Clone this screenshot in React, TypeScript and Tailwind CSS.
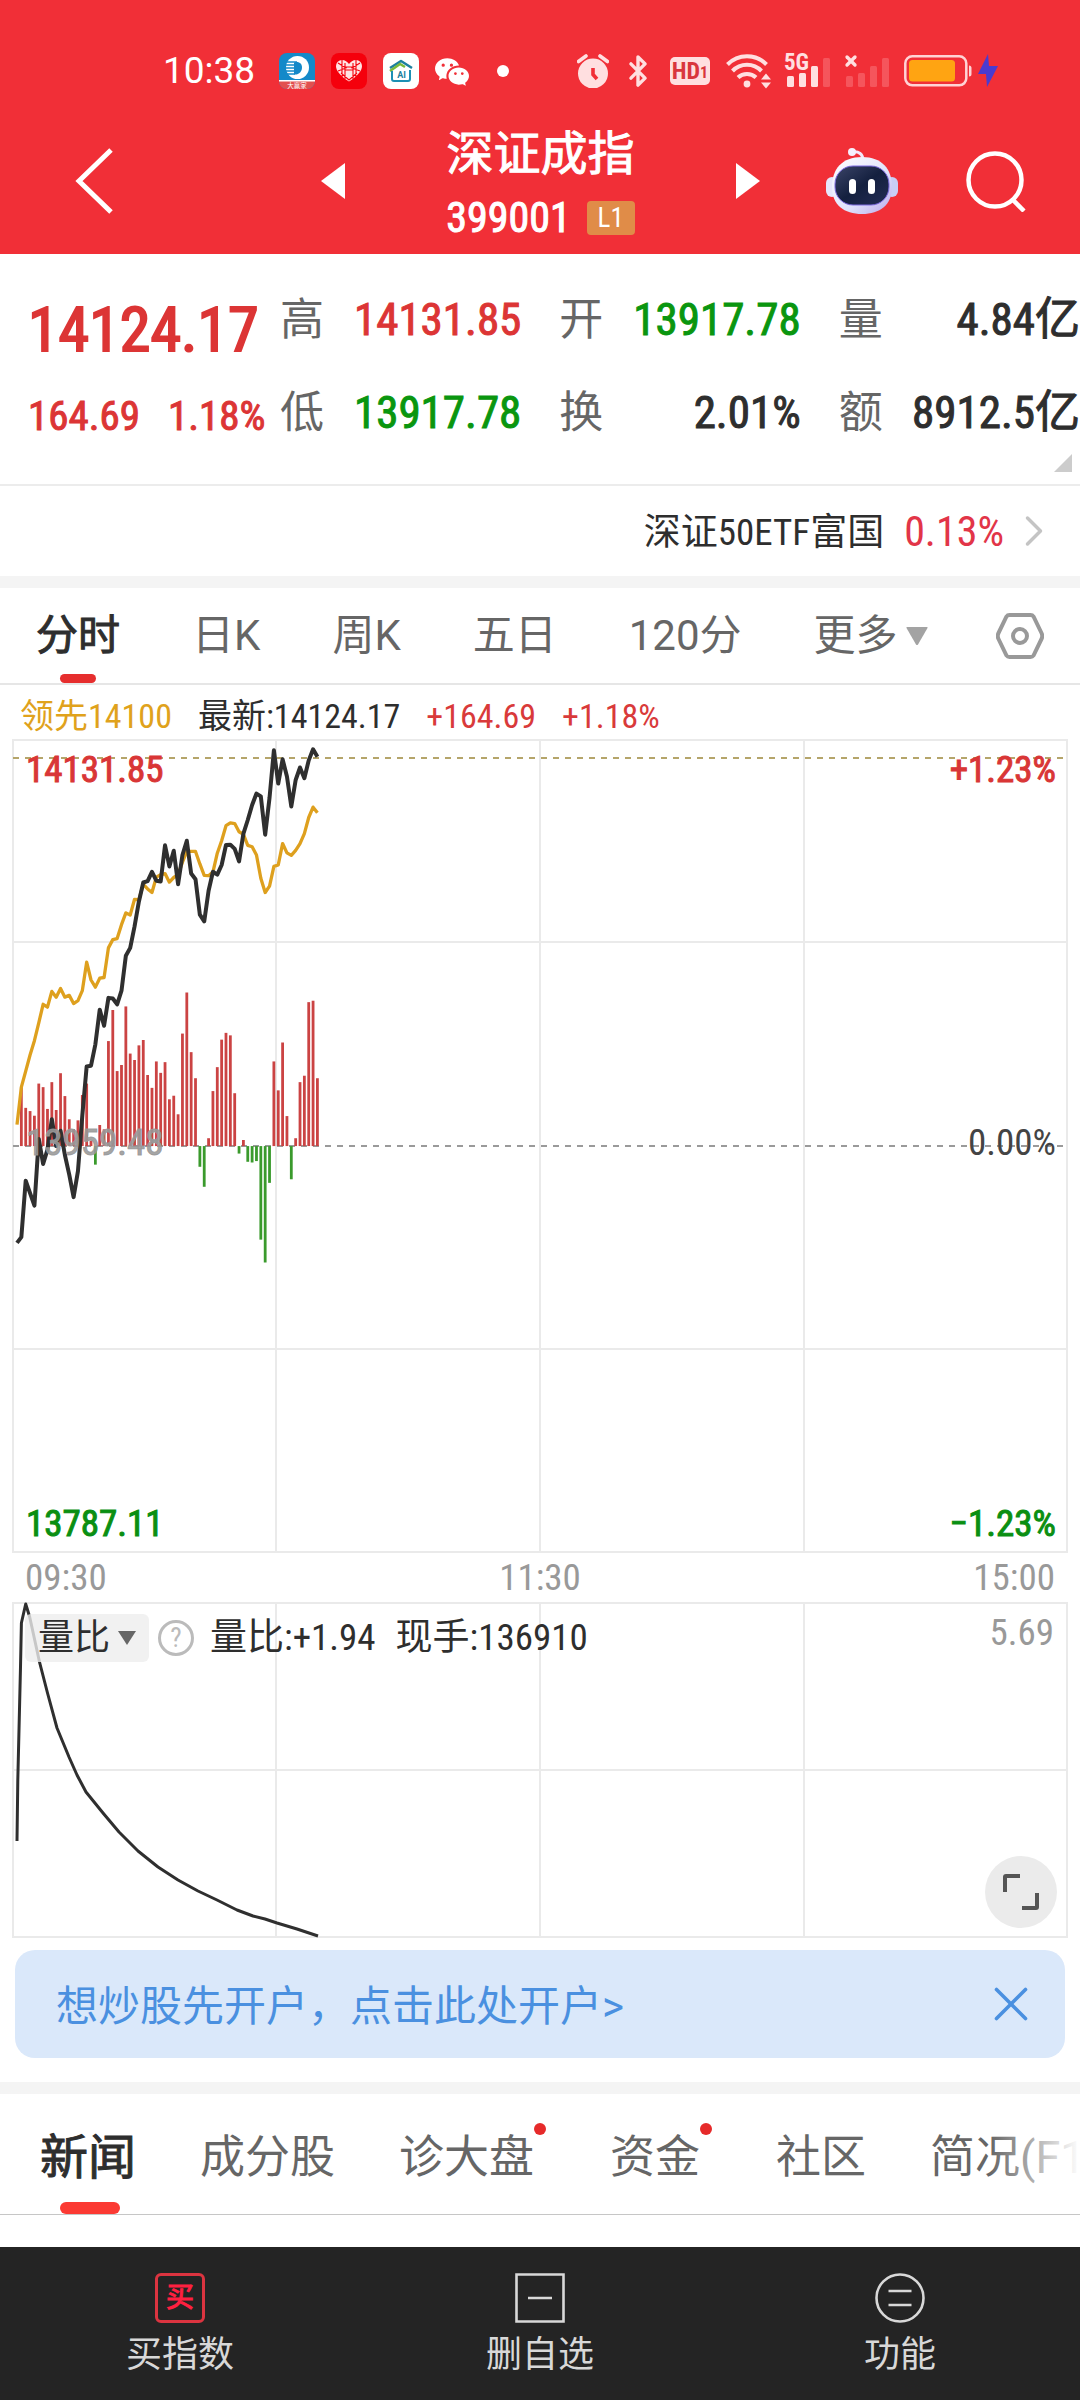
import { Bluetooth, ChevronRight, X } from 'lucide-react';
import { BsWechat } from 'react-icons/bs';
import type { ReactNode } from 'react';

const PRICE = [
  1436, 1420, 1262, 1297, 1332, 1145, 1215, 1175, 1090, 1165, 1122, 1190, 1245, 1308, 1235, 1080, 942, 940, 880, 783,
  828, 750, 752, 768, 730, 632, 610, 550, 480, 427, 423, 397, 422, 424, 323, 382, 338, 432, 350, 310, 402, 418, 517,
  536, 450, 397, 405, 378, 322, 321, 333, 368, 290, 252, 210, 178, 186, 293, 190, 57, 150, 82, 130, 214, 140, 105, 135,
  85, 54, 75,
];

const LEAD = [
  1105, 1000, 955, 910, 870, 820, 768, 776, 732, 748, 724, 748, 743, 766, 758, 730, 650, 700, 720, 695, 693, 610, 587,
  584, 545, 512, 518, 474, 475, 432, 445, 455, 412, 405, 402, 426, 413, 405, 370, 340, 340, 340, 375, 407, 408, 398,
  345, 310, 268, 260, 262, 285, 292, 323, 327, 350, 415, 455, 437, 382, 378, 318, 344, 351, 337, 318, 290, 245, 216, 232,
];

const BARS = [
  1165, 1000, 1058, 1067, 1080, 990, 1000, 1061, 986, 1064, 961, 1025, 1090, 1118, 1093, 1022, 990, 1150, 1217, 1106,
  1118, 871, 784, 955, 938, 774, 906, 924, 883, 868, 966, 1002, 928, 960, 930, 1034, 1024, 1076, 850, 735, 902, 975,
  1223, 1279, 1143, 1011, 944, 867, 848, 855, 1017, 1186, 1148, 1209, 1211, 1207, 1427, 1491, 1268, 928, 1009, 875,
  1081, 1258, 1143, 986, 968, 762, 758, 975,
];

const RATIO =
  '5,239 5.8,178 8.5,65 9.4,21 13.7,2 17.7,15 27.5,60 35.5,91 45,126 57,155 65,173 74,190 91,211 107,230 126,249 146,265 166,278 186,289 205,298 225,308 241,314 253,317 265,321 285,327 306,334';

const ZERO = 1165;
const minuteX = (i: number) => 5 + i * 4.354;
const levelY = (v: number) => v / 2.8 - 9;
const toPoints = (series: number[]) => series.map((v, i) => `${minuteX(i)},${levelY(v)}`).join(' ');

const num = "[font-family:'Roboto_Condensed','Noto_Sans_CJK_SC',sans-serif]";
const strong = '[-webkit-text-stroke:1px]';

function ClockIcon() {
  return (
    <svg viewBox="0 0 32 34" className="h-[34px] w-8" aria-hidden="true">
      <circle cx="16" cy="19.5" r="15" fill="#ffdfe0" />
      <path d="M1.5 7.5 L9 2 M30.5 7.5 L23 2" stroke="#ffdfe0" strokeWidth="3.6" strokeLinecap="round" />
      <path d="M16 14v6.500l4 4.500" stroke="#f12f37" strokeWidth="3.6" fill="none" />
    </svg>
  );
}

function WifiIcon() {
  return (
    <svg viewBox="0 0 46 36" className="h-9 w-[46px]" fill="none" aria-hidden="true">
      <g stroke="#ffdfe0" strokeWidth="4">
        <path d="M1.500 11.500 A27 27 0 0 1 40.500 11.500" />
        <path d="M6.500 18 A20 20 0 0 1 35.500 18" />
        <path d="M12 24.500 A13 13 0 0 1 30 24.500" />
      </g>
      <circle cx="21" cy="31" r="3.4" fill="#ffdfe0" />
      <path d="M40 20.500l5 6h-10z M40 35.500l5-6h-10z" fill="#ffdfe0" />
    </svg>
  );
}

function Signal({ children, levels }: { children: ReactNode; levels: string[] }) {
  return (
    <span className="relative block h-9 w-[46px]">
      <svg viewBox="0 0 46 36" className="h-9 w-[46px]" aria-hidden="true">
        <rect x="3" y="23" width="7" height="11" rx="1.500" fill={levels[0]} />
        <rect x="15" y="20" width="7" height="14" rx="1.500" fill={levels[1]} />
        <rect x="27" y="13" width="7" height="21" rx="1.500" fill={levels[2]} />
        <rect x="39" y="5" width="7" height="29" rx="1.500" fill={levels[3]} />
      </svg>
      {children}
    </span>
  );
}

function StatusBar() {
  return (
    <div className="flex h-[142px] items-center pl-[163px] pr-20 text-white">
      <span className="w-[92px] text-[37px] leading-10">10:38</span>
      <div className="ml-6 flex items-center gap-4">
        <svg viewBox="0 0 36 36" className="size-9" aria-hidden="true">
          <rect width="36" height="36" rx="8" fill="#1489c9" />
          <path d="M0 27h36v1a8 8 0 0 1-8 8H8a8 8 0 0 1-8-8z" fill="#e2504f" />
          <rect y="27" width="36" height="1.500" fill="#fff" />
          <circle cx="18.500" cy="14.500" r="11.500" fill="#fff" />
          <path d="M15 9.500c5-1.500 8 1 8 5s-3 7.500-8 7z" fill="#1489c9" />
          <path d="M6 9h12M6 12h10M6 15h10M6 18h10M7 21h9" stroke="#1489c9" strokeWidth="1.300" />
          <text x="18" y="34.500" textAnchor="middle" fontSize="6.500" fill="#fff">大赢家</text>
        </svg>
        <svg viewBox="0 0 36 36" className="size-9" aria-hidden="true">
          <rect width="36" height="36" rx="8" fill="#f5000c" />
          <path d="M18 28.500C8 22 5 17 5 13a6 6 0 0 1 6-6c3 0 5.500 2 7 4 1.500-2 4-4 7-4a6 6 0 0 1 6 6c0 4-3 9-13 15.500z" fill="#ffe4e4" />
          <path d="M7 10l8 5-8 3M29 10l-8 5 8 3M11 7v17M25 7v17M14 10v16M22 10v16M10 20l8 7 8-7M14 17h8M14 14h8" stroke="#f5000c" strokeWidth="1.100" fill="none" />
        </svg>
        <svg viewBox="0 0 36 36" className="size-9" aria-hidden="true">
          <rect width="36" height="36" rx="8" fill="#fff" />
          <path d="M7 15L18 8l11 7" fill="none" stroke="#1c7f9f" strokeWidth="2.500" strokeLinejoin="round" />
          <path d="M7 18l10-7 5 3" fill="none" stroke="#79b93c" strokeWidth="2.500" />
          <path d="M9 18v8a2 2 0 0 0 2 2h14a2 2 0 0 0 2-2v-9" fill="none" stroke="#1c8fb4" strokeWidth="2" />
          <text x="18.500" y="25" textAnchor="middle" fontSize="9" fontWeight="700" fill="#1c7f9f">AI</text>
        </svg>
        <BsWechat className="size-[34px]" aria-label="微信" />
      </div>
      <span className="ml-[28px] size-3 rounded-full bg-white" />
      <div className="ml-auto flex items-center">
        <ClockIcon />
        <Bluetooth className="ml-[12px] h-9 w-[34px] text-[#ffdfe0]" strokeWidth={2.4} />
        <span className={`ml-[15px] flex h-7 w-10 items-center justify-center rounded-[5px] bg-[#ffdfe0] text-2xl font-bold text-[#d9363d] ${num}`}>
          HD<span className="pt-1 text-base">1</span>
        </span>
        <span className="ml-[16px]"><WifiIcon /></span>
        <span className="ml-[12px]">
          <Signal levels={['#ffdfe0', '#ffdfe0', '#ffdfe0', '#f5555c']}>
            <span className={`absolute left-0 top-0 text-[23px] font-bold leading-5 text-[#ffdfe0] ${num}`}>5G</span>
          </Signal>
        </span>
        <span className="ml-[13px]">
          <Signal levels={['#f5555c', '#f5555c', '#f5555c', '#f5555c']}>
            <X className="absolute left-0 top-0 size-4 text-[#ffdfe0]" strokeWidth={5} />
          </Signal>
        </span>
        <svg viewBox="0 0 96 34" className="ml-[15px] h-[34px] w-24" aria-hidden="true">
          <rect x="1.300" y="2.300" width="61" height="29" rx="7" fill="none" stroke="#ffd3d5" strokeWidth="2.500" />
          <rect x="5" y="6" width="46" height="21.500" rx="3.500" fill="#ffa412" />
          <path d="M65 11.500q2.500 0 2.500 2.500v6q0 2.500-2.500 2.500z" fill="#ffd3d5" />
          <path d="M84 0L74 20h8l1 13 11-21h-9z" fill="#4a3bd0" />
        </svg>
      </div>
    </div>
  );
}

function RobotIcon() {
  return (
    <svg viewBox="0 0 72 68" className="h-[68px] w-[72px]" aria-hidden="true">
      <defs>
        <linearGradient id="shell" x1="0" y1="0" x2="1" y2="1">
          <stop offset="0" stopColor="#ffffff" />
          <stop offset="0.6" stopColor="#dfe2fb" />
          <stop offset="1" stopColor="#b9a6ea" />
        </linearGradient>
        <linearGradient id="visor" x1="0" y1="0" x2="1" y2="1">
          <stop offset="0" stopColor="#3b4468" />
          <stop offset="0.5" stopColor="#14203f" />
          <stop offset="1" stopColor="#232c55" />
        </linearGradient>
      </defs>
      <path d="M26 5c7-1 11 2 11 9" fill="none" stroke="#f3e9fb" strokeWidth="3" />
      <circle cx="26" cy="5" r="4" fill="#f6effc" />
      <rect x="0" y="30" width="12" height="20" rx="6" fill="#e6e6fb" />
      <rect x="60" y="30" width="12" height="20" rx="6" fill="#c9cdf5" />
      <path d="M36 10c20 0 30 12 30 30S54 67 36 67 6 58 6 40 16 10 36 10z" fill="url(#shell)" />
      <rect x="9" y="19" width="54" height="39" rx="18" fill="url(#visor)" stroke="#7d6be0" strokeWidth="1" />
      <rect x="23" y="32" width="7" height="15" rx="3.500" fill="#fff" />
      <rect x="42" y="32" width="7" height="15" rx="3.500" fill="#fff" />
    </svg>
  );
}

function Header() {
  return (
    <header className="bg-[#f12f37] text-white">
      <StatusBar />
      <div className="-mt-[34px] flex h-[146px] items-center justify-between gap-[66px] pl-[75px] pr-[54px]">
        <button aria-label="返回" className="w-[180px]">
          <svg viewBox="0 0 40 66" className="h-[66px] w-10" fill="none" stroke="currentColor" strokeWidth="5">
            <path d="M36 2L4 33l32 31" />
          </svg>
        </button>
        <div className="flex flex-1 items-center justify-between">
          <button aria-label="上一只">
            <svg viewBox="0 0 24 36" className="h-9 w-6" fill="currentColor"><path d="M24 0v36L0 18z" /></svg>
          </button>
          <div className="flex flex-col items-center">
            <h1 className={`text-[47px] leading-[60px] ${strong}`}>深证成指</h1>
            <p className={`mt-[14px] flex items-center gap-4 text-[42px] leading-10 ${num}`}>
              <span className={strong}>399001</span>
              <span className="flex h-[34px] w-12 items-center justify-center rounded bg-[#e08c48] text-[27px]">L1</span>
            </p>
          </div>
          <button aria-label="下一只">
            <svg viewBox="0 0 24 36" className="h-9 w-6" fill="currentColor"><path d="M0 0v36l24-18z" /></svg>
          </button>
        </div>
        <button aria-label="智能助手"><RobotIcon /></button>
        <button aria-label="搜索">
          <svg viewBox="0 0 62 62" className="size-[62px]" fill="none" stroke="currentColor" strokeWidth="4.500">
            <circle cx="31" cy="30" r="26.500" />
            <path d="M48.500 49.500L60 61" />
          </svg>
        </button>
      </div>
    </header>
  );
}

const QUOTES = [
  { label: '高', value: '14131.85', color: 'text-[#dc3535]' },
  { label: '开', value: '13917.78', color: 'text-[#0a960f]' },
  { label: '量', value: '4.84亿', color: 'text-[#2e2e2e]' },
  { label: '低', value: '13917.78', color: 'text-[#0a960f]' },
  { label: '换', value: '2.01%', color: 'text-[#2e2e2e]' },
  { label: '额', value: '8912.5亿', color: 'text-[#2e2e2e]' },
];

function QuotePanel() {
  return (
    <section className="relative flex h-[232px] border-b-2 border-[#ececec] pt-[34px]">
      <div className={`flex w-[280px] shrink-0 flex-col pl-7 text-[#dc3535] ${num}`}>
        <span className="text-[62px] leading-[84px] [-webkit-text-stroke:2px]">14124.17</span>
        <span className={`mt-[12px] flex gap-7 text-[41px] leading-[64px] ${strong}`}>
          <span>164.69</span>
          <span>1.18%</span>
        </span>
      </div>
      <dl className="grid flex-1 auto-rows-[64px] grid-cols-3 gap-x-[38px] gap-y-[29px]">
        {QUOTES.map((q) => (
          <div key={q.label} className="flex items-center justify-between whitespace-nowrap">
            <dt className="text-[44px] leading-[64px] text-[#666]">{q.label}</dt>
            <dd className={`text-[45px] leading-[64px] ${num} ${strong} ${q.color}`}>{q.value}</dd>
          </div>
        ))}
      </dl>
      <svg viewBox="0 0 18 18" className="absolute bottom-3 right-2 size-[18px]" aria-hidden="true">
        <path d="M18 0v18H0z" fill="#ccc" />
      </svg>
    </section>
  );
}

function FundRow() {
  return (
    <a href="#fund" className={`flex h-[102px] items-center justify-end border-b-[12px] border-[#f4f4f4] pr-5 ${num}`}>
      <span className="pt-1 text-[37px] text-[#2e2e2e]">深证50ETF富国</span>
      <span className="ml-5 text-[42px] text-[#e23548]">0.13%</span>
      <ChevronRight className="ml-1 size-[52px] text-[#c4c4c4]" strokeWidth={1.6} />
    </a>
  );
}

function PeriodTabs() {
  const rest = ['日K', '周K', '五日', '120分'];
  return (
    <nav className="flex h-[97px] items-center gap-[72px] whitespace-nowrap border-b-2 border-[#e6e6e6] pl-9 pr-9 text-[42px] text-[#666]">
      <button className={`relative flex h-full shrink-0 items-center text-[#2e2e2e] ${strong}`}>
        分时
        <span className="absolute bottom-0 left-6 h-[9px] w-9 rounded-full bg-[#e62e2e]" />
      </button>
      {rest.map((t) => (
        <button key={t} className="shrink-0">{t}</button>
      ))}
      <button className="flex shrink-0 items-center gap-2">
        更多
        <svg viewBox="0 0 22 18" className="h-[18px] w-[22px]" aria-hidden="true"><path d="M1 0h20q1 0 0.500 1L12 17.500q-1 1-2 0L0.500 1Q0 0 1 0z" fill="#a3a3a3" /></svg>
      </button>
      <button aria-label="设置" className="-ml-9 flex flex-1 justify-end">
        <svg viewBox="0 0 48 48" className="size-12" fill="none" stroke="#999" strokeWidth="4">
          <path d="M13.500 3h21q2 0 3 1.500l8 16.500q1.500 3 0 6l-8 16.500q-1 1.500-3 1.500h-21q-2 0-3-1.500l-8-16.500q-1.500-3 0-6l8-16.500q1-1.500 3-1.500z" />
          <circle cx="24" cy="24" r="7" />
        </svg>
      </button>
    </nav>
  );
}

function MinuteChart() {
  return (
    <section className={num}>
      <div className="flex h-[54px] items-center gap-[26px] whitespace-nowrap pl-5 pt-2 text-[34px]">
        <span className="text-[#e0a21c]">领先14100</span>
        <span className="text-[#2e2e2e]">最新:14124.17</span>
        <span className="text-[#d93a3a]">+164.69</span>
        <span className="text-[#d93a3a]">+1.18%</span>
      </div>
      <div className="relative mx-3 text-[37px] leading-10">
        <svg viewBox="0 0 1056 815" className="block h-auto w-full" fill="none" aria-label="分时走势">
          <path d="M1 1h1054v812H1z M264 1v812 M528 1v812 M792 1v812 M1 203h1054 M1 610h1054" stroke="#eaeaea" strokeWidth="2" />
          <path d="M1 19h1054" stroke="#b5a56a" strokeWidth="2" strokeDasharray="6 6" />
          <path d="M1 407h1054" stroke="#9a9a9a" strokeWidth="2" strokeDasharray="6 6" />
          {BARS.map((v, i) => (
            <path
              key={i}
              d={`M${minuteX(i)} ${levelY(ZERO)}V${levelY(v)}`}
              stroke={v > ZERO ? '#3a9a2c' : '#cb4343'}
              strokeWidth="2.800"
            />
          ))}
          <polyline points={toPoints(LEAD)} stroke="#dea01e" strokeWidth="3.300" strokeLinejoin="round" />
          <polyline points={toPoints(PRICE)} stroke="#2f2f2f" strokeWidth="4" strokeLinejoin="round" />
        </svg>
        <span className={`absolute left-[14px] top-[11px] text-[#d93636] ${strong}`}>14131.85</span>
        <span className={`absolute right-3 top-[11px] text-[#d93636] ${strong}`}>+1.23%</span>
        <span className={`absolute left-[14px] top-[384px] text-[#999]/90 ${strong}`}>13959.48</span>
        <span className="absolute right-3 top-[384px] text-[#444]">0.00%</span>
        <span className={`absolute bottom-[10px] left-[14px] text-[#0a8f12] ${strong}`}>13787.11</span>
        <span className={`absolute bottom-[10px] right-3 text-[#0a8f12] ${strong}`}>−1.23%</span>
      </div>
      <div className="flex h-12 items-center justify-between px-[25px] text-[37px] text-[#999]">
        <span>09:30</span>
        <span>11:30</span>
        <span>15:00</span>
      </div>
    </section>
  );
}

function RatioChart() {
  return (
    <section className={`relative mx-3 text-[37px] leading-10 ${num}`}>
      <svg viewBox="0 0 1056 336" className="block h-auto w-full" fill="none" aria-label="量比走势">
        <path d="M1 1h1054v334H1z M264 1v334 M528 1v334 M792 1v334 M1 168h1054" stroke="#eaeaea" strokeWidth="2" />
        <polyline points={RATIO} stroke="#2f2f2f" strokeWidth="3" strokeLinejoin="round" />
      </svg>
      <div className="absolute left-[13px] top-3 flex items-center whitespace-nowrap text-[#2e2e2e]">
        <button className="flex h-12 w-[124px] items-center justify-center gap-2 rounded-md bg-[#eeeeee]/80 text-[36px]">
          <span>量比</span>
          <svg viewBox="0 0 18 14" className="h-[14px] w-[18px]" aria-hidden="true"><path d="M0 0h18l-9 14z" fill="#666" /></svg>
        </button>
        <button aria-label="量比说明" className="ml-[9px] flex size-9 items-center justify-center rounded-full border-[3px] border-[#bbb] text-[27px] leading-none text-[#bbb]">?</button>
        <span className="ml-4">量比:+1.94</span>
        <span className="ml-5">现手:136910</span>
      </div>
      <span className="absolute right-[14px] top-[11px] text-[#999]">5.69</span>
      <button aria-label="全屏" className="absolute bottom-[10px] right-[11px] flex size-[72px] items-center justify-center rounded-full bg-[#ebebeb]">
        <svg viewBox="0 0 38 38" className="size-[38px]" fill="none" stroke="#555" strokeWidth="4">
          <path d="M3 19V4q0-1 1-1h14 M35 20v14q0 1-1 1H20" />
        </svg>
      </button>
    </section>
  );
}

function Banner() {
  return (
    <section className="border-b-[12px] border-[#f4f4f4] px-[15px] pb-6 pt-3">
      <div className="flex h-[108px] items-center justify-between rounded-[20px] bg-[#dae8fa] pl-[41px] pr-[25px] text-[#4a90e0]">
        <a href="#open" className="pt-1 text-[42px]">想炒股先开户，点击此处开户&gt;</a>
        <button aria-label="关闭"><X className="size-[58px]" strokeWidth={1.5} /></button>
      </div>
    </section>
  );
}

const SECTIONS = [
  { name: '成分股', dot: false },
  { name: '诊大盘', dot: true },
  { name: '资金', dot: true },
  { name: '社区', dot: false },
  { name: '简况(F10)', dot: false },
];

function SectionTabs() {
  return (
    <nav className="relative flex h-[121px] items-center gap-16 overflow-hidden whitespace-nowrap border-b border-[#c6c6c6] pl-10 text-[45px] text-[#666]">
      <button className={`relative flex h-full shrink-0 items-center pt-2 text-5xl text-[#2e2e2e] ${strong}`}>
        新闻
        <span className="absolute bottom-0 left-5 h-3 w-[60px] rounded-full bg-[#fb3a33]" />
      </button>
      {SECTIONS.map((s) => (
        <button key={s.name} className={`relative flex h-full shrink-0 items-center pt-2 ${s.dot ? 'pr-3' : ''}`}>
          {s.name}
          {s.dot && <span className="absolute right-0 top-[29px] size-3 rounded-full bg-[#e62a2a]" />}
        </button>
      ))}
      <span className="pointer-events-none absolute inset-y-0 right-0 w-[90px] bg-gradient-to-r from-white/0 to-white" />
    </nav>
  );
}

function ActionBar() {
  return (
    <footer className="mt-auto grid h-[153px] grid-cols-3 bg-[#242424] text-[36px] leading-[48px] text-[#d8d8d8]">
      <button className="flex flex-col items-center pt-[26px]">
        <span className={`flex size-[50px] items-center justify-center rounded-md border-[3px] border-[#dc3440] text-[28px] leading-none text-[#ff2040] ${strong}`}>买</span>
        <span className="mt-2">买指数</span>
      </button>
      <button className="flex flex-col items-center pt-[26px]">
        <svg viewBox="0 0 50 50" className="size-[50px]" fill="none" stroke="#d8d8d8" strokeWidth="2.600">
          <path d="M1.500 1.500h47v47h-47z M13 25h24" />
        </svg>
        <span className="mt-2">删自选</span>
      </button>
      <button className="flex flex-col items-center pt-[26px]">
        <svg viewBox="0 0 50 50" className="size-[50px]" fill="none" stroke="#d8d8d8" strokeWidth="2.600">
          <circle cx="25" cy="25" r="23.500" />
          <path d="M13.500 18h23 M13.500 32h23" />
        </svg>
        <span className="mt-2">功能</span>
      </button>
    </footer>
  );
}

export default function App() {
  return (
    <div className="flex min-h-screen flex-col bg-white [font-family:Roboto,'Noto_Sans_CJK_SC',sans-serif]">
      <Header />
      <main>
        <QuotePanel />
        <FundRow />
        <PeriodTabs />
        <MinuteChart />
        <RatioChart />
        <Banner />
        <SectionTabs />
      </main>
      <ActionBar />
    </div>
  );
}
